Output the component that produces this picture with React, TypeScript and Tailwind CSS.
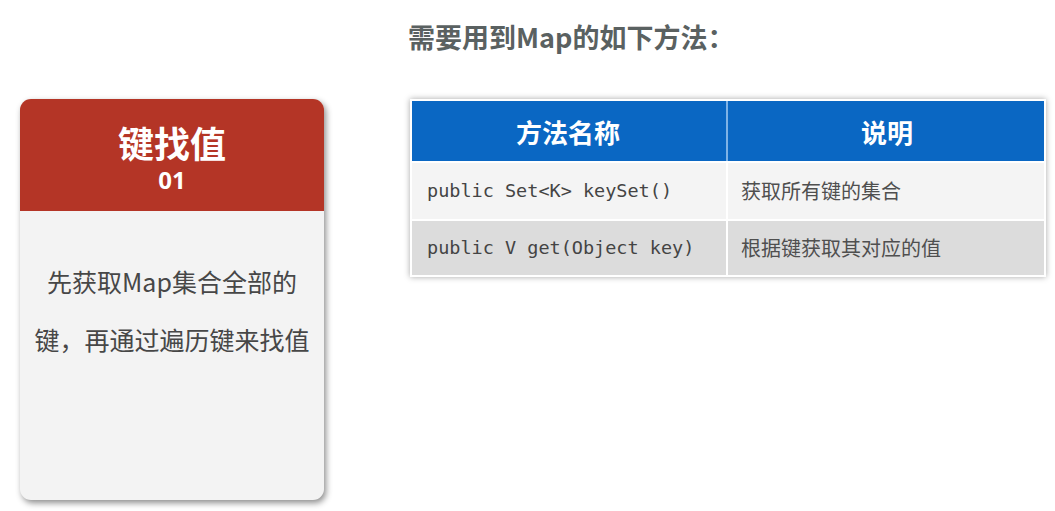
export default function App() {
  const font = { fontFamily: '"Noto Sans CJK SC", "Noto Sans", sans-serif' };
  return (
    <div className="w-[1055px] h-[511px] bg-white flex overflow-hidden" style={font}>
      <div className="ml-[20px] mt-[99px] w-[304px] h-[401px] rounded-[11px] bg-[#f3f3f3] shadow-[2px_3px_6px_rgba(0,0,0,0.45)] overflow-hidden flex flex-col">
        <div className="h-[112px] bg-[#b43526] flex flex-col items-center pt-[23px] text-white font-bold">
          <div className="text-[36px] leading-[40px]">键找值</div>
          <div className="text-[24px] leading-[26px] mt-[5px]" style={{ fontFamily: '"Noto Sans", sans-serif' }}>01</div>
        </div>
        <div className="flex flex-col items-center pt-[41px] text-[25px] leading-[58px] text-[#474747]">
          <div>先获取Map集合全部的</div>
          <div>键，再通过遍历键来找值</div>
        </div>
      </div>
      <div className="ml-[86px] flex flex-col">
        <div className="mt-[19px] ml-[-2px] text-[27px] leading-[36px] font-bold text-[#5a6161]">需要用到Map的如下方法：</div>
        <div className="mt-[44px] w-[636px] border-2 border-white bg-white shadow-[0_0_6px_rgba(0,0,0,0.35)] flex flex-col gap-[2px]">
          <div className="flex h-[60px] bg-[#0a67c3] text-white font-bold text-[26px] gap-[2px]">
            <div className="w-[312px] bg-[#0a67c3] flex items-center justify-center">方法名称</div>
            <div className="w-[2px] bg-[#7fb3e6]"></div>
            <div className="flex-1 flex items-center justify-center">说明</div>
          </div>
          <div className="flex h-[56px] bg-[#f4f4f4]">
            <div className="w-[314px] flex items-center pl-[15px] text-[18.5px] text-[#444]" style={{ fontFamily: '"DejaVu Sans Mono", monospace' }}>public Set&lt;K&gt; keySet()</div>
            <div className="w-[2px] bg-white"></div>
            <div className="flex-1 flex items-center pl-[13px] text-[20px] text-[#4f4f4f]">获取所有键的集合</div>
          </div>
          <div className="flex h-[54px] bg-[#dcdcdc]">
            <div className="w-[314px] flex items-center pl-[15px] text-[18.5px] text-[#444]" style={{ fontFamily: '"DejaVu Sans Mono", monospace' }}>public V get(Object key)</div>
            <div className="w-[2px] bg-white"></div>
            <div className="flex-1 flex items-center pl-[13px] text-[20px] text-[#4f4f4f]">根据键获取其对应的值</div>
          </div>
        </div>
      </div>
    </div>
  );
}
